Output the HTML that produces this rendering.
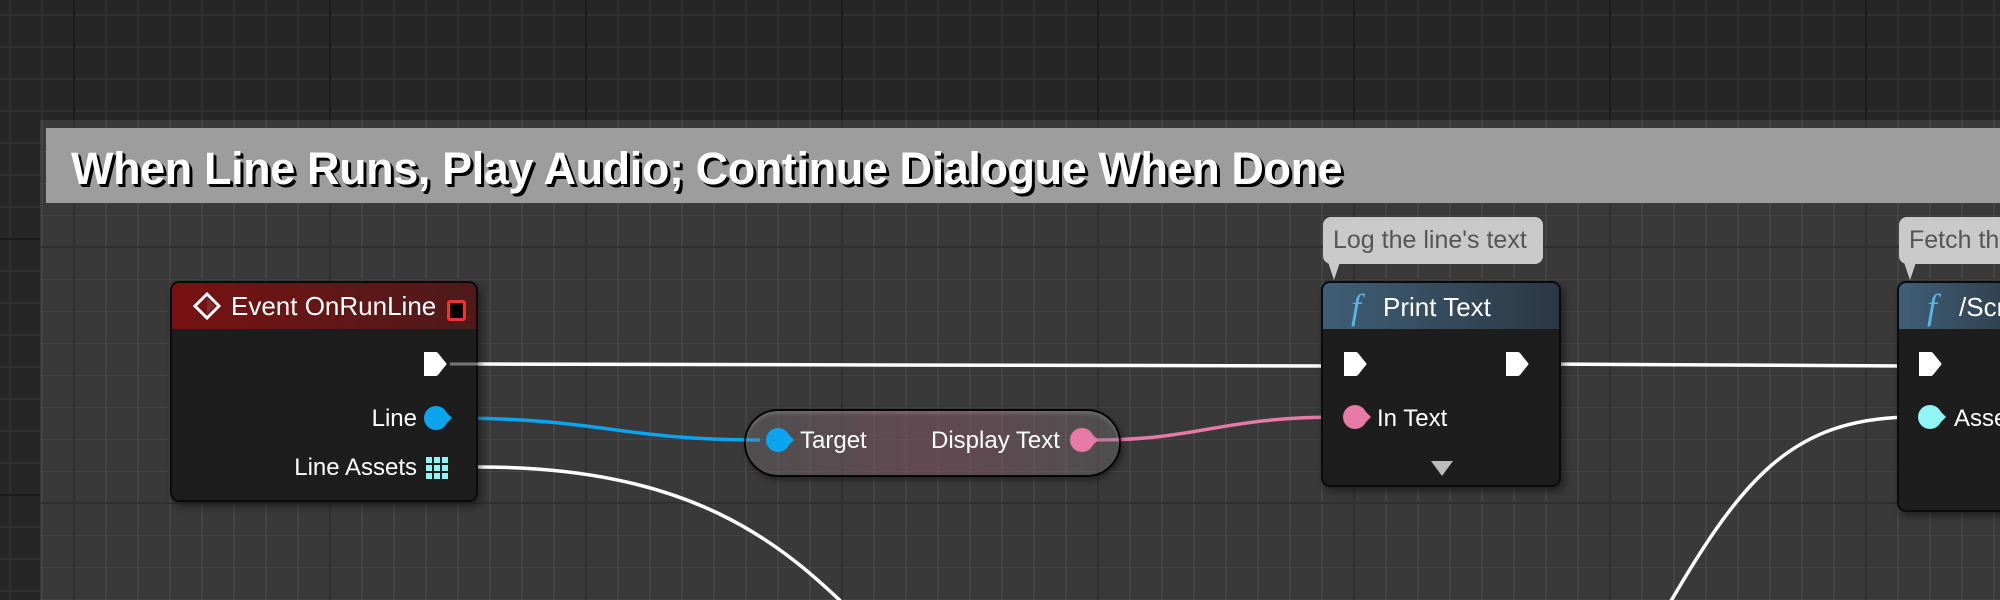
<!DOCTYPE html>
<html><head><meta charset="utf-8"><style>
html,body{margin:0;padding:0;}
body{width:2000px;height:600px;overflow:hidden;position:relative;font-family:"Liberation Sans",Arial,sans-serif;
background-color:#262626;
background-image:
linear-gradient(90deg,rgba(0,0,0,0) 73px,#1c1c1c 73px,#1c1c1c 75px,rgba(0,0,0,0) 75px),
linear-gradient(0deg,rgba(0,0,0,0) 7px,#1c1c1c 7px,#1c1c1c 9px,rgba(0,0,0,0) 9px),
linear-gradient(90deg,rgba(0,0,0,0) 9px,#2f2f2f 9px,#2f2f2f 11px,rgba(0,0,0,0) 11px),
linear-gradient(0deg,rgba(0,0,0,0) 7px,#2f2f2f 7px,#2f2f2f 9px,rgba(0,0,0,0) 9px);
background-size:256px 256px,256px 256px,32px 32px,32px 32px;
background-position:0 0,0 -9px,0 0,0 -9px;}
.comment{position:absolute;left:40px;top:120px;width:1960px;height:480px;
background-color:#393939;
background-image:
linear-gradient(90deg,rgba(0,0,0,0) 33px,#303030 33px,#303030 35px,rgba(0,0,0,0) 35px),
linear-gradient(0deg,rgba(0,0,0,0) 127px,#303030 127px,#303030 129px,rgba(0,0,0,0) 129px),
linear-gradient(90deg,rgba(0,0,0,0) 1px,#444 1px,#444 3px,rgba(0,0,0,0) 3px),
linear-gradient(0deg,rgba(0,0,0,0) 31px,#444 31px,#444 33px,rgba(0,0,0,0) 33px);
background-size:256px 256px,256px 256px,32px 32px,32px 32px;
background-position:0 0,0 -1px,0 0,0 -1px;}
.title{position:absolute;left:46px;top:128px;width:1954px;height:75px;background:#9d9d9d;}
.title span{position:absolute;left:25px;top:15px;font-size:45px;font-weight:bold;color:#fff;white-space:nowrap;
text-shadow:3px 3px 0 #000,2px 2px 1px #000;letter-spacing:-0.4px;}
.node{position:absolute;background:#1d1d1d;border:2px solid #0b0b0b;border-radius:9px;overflow:hidden;box-shadow:3px 4px 8px rgba(0,0,0,.45);}
.hdr{position:absolute;left:0;top:0;right:0;height:46px;color:#fff;font-size:26px;}
.lbl{position:absolute;color:#fff;font-size:24px;white-space:nowrap;}
.bubble{position:absolute;background:#c9c9c9;border-radius:8px;color:#555;font-size:25px;white-space:nowrap;}
.pill{position:absolute;left:744px;top:409px;width:373px;height:64px;border:2px solid #050505;border-radius:34px;
background:linear-gradient(90deg,rgba(120,120,120,.35),rgba(150,90,110,.45) 50%,rgba(120,120,120,.35));
box-shadow:inset 0 3px 3px rgba(255,255,255,.15),2px 3px 6px rgba(0,0,0,.4);}
svg{position:absolute;left:0;top:0;}
</style></head><body>
<div class="comment"></div>
<div class="title"><span>When Line Runs, Play Audio; Continue Dialogue When Done</span></div>

<svg width="2000" height="600">
<g fill="none" stroke-width="3.5">
<path d="M478,364 L1340,366" stroke="#fff"/>
<path d="M1540,364 L1910,366" stroke="#fff"/>
<path d="M450,418 C600,418 620,440 760,440" stroke="#0aa5ee"/>
<path d="M1095,440 C1200,440 1220,417 1340,417" stroke="#e87aa8"/>
<path d="M478,467 C690,467 780,540 860,620" stroke="#fff"/>
<path d="M1915,417 C1790,417 1740,480 1660,620" stroke="#fff"/>
</g>
</svg>

<!-- Event node -->
<div class="node" style="left:170px;top:281px;width:304px;height:217px;">
<div class="hdr" style="background:linear-gradient(90deg,#781212,#4e1a1a);">
<svg width="30" height="30" style="left:20px;top:8px"><path d="M15,3 L27,15 L15,27 L3,15 Z" fill="none" stroke="#fff" stroke-width="3"/><path d="M15,7 L23,15 L15,23 Z" fill="#8a3a3a" opacity=".6"/></svg>
<span style="position:absolute;left:59px;top:8px;">Event OnRunLine</span>
<div style="position:absolute;left:275px;top:17px;width:13px;height:15px;background:#000;border:3px solid #e33;border-radius:3px;"></div>
</div>
<div class="lbl" style="right:59px;top:122px;">Line</div>
<div class="lbl" style="right:59px;top:171px;">Line Assets</div>
</div>

<!-- pill -->
<div class="pill"></div>
<div class="lbl" style="left:800px;top:427px;">Target</div>
<div class="lbl" style="left:931px;top:427px;">Display Text</div>

<!-- Print Text -->
<div class="bubble" style="left:1323px;top:217px;width:220px;height:47px;"><span style="position:absolute;left:10px;top:9px;">Log the line's text</span></div>
<svg width="2000" height="600"><path d="M1328,262 L1340,262 L1334,280 Z" fill="#c9c9c9"/><path d="M1904,262 L1916,262 L1910,280 Z" fill="#c9c9c9"/></svg>
<div class="node" style="left:1321px;top:281px;width:236px;height:202px;">
<div class="hdr" style="background:linear-gradient(90deg,#3f5e76,#2b3844);">
<span style="position:absolute;left:28px;top:3px;font-family:'Liberation Serif',serif;font-style:italic;font-size:36px;color:#5ab4ea;">f</span>
<span style="position:absolute;left:60px;top:9px;">Print Text</span>
</div>
<div class="lbl" style="left:54px;top:122px;">In Text</div>
<svg width="30" height="20" style="left:106px;top:176px"><path d="M2,2 L24,2 L13,17 Z" fill="#bbb"/></svg>
</div>

<!-- right node -->
<div class="bubble" style="left:1899px;top:217px;width:140px;height:47px;"><span style="position:absolute;left:10px;top:9px;">Fetch the</span></div>
<svg width="2000" height="600"><path d="M1904,262 L1916,262 L1910,280 Z" fill="#c9c9c9"/></svg>
<div class="node" style="left:1897px;top:281px;width:140px;height:227px;">
<div class="hdr" style="background:linear-gradient(90deg,#3f5e76,#2b3844);">
<span style="position:absolute;left:28px;top:3px;font-family:'Liberation Serif',serif;font-style:italic;font-size:36px;color:#5ab4ea;">f</span>
<span style="position:absolute;left:60px;top:9px;">/Script</span>
</div>
<div class="lbl" style="left:55px;top:122px;">Assets</div>
</div>

<!-- pins -->
<svg width="2000" height="600">
<defs><path id="ex" d="M0,0 H12 Q13,0 14,1 L22,11 Q23,12 22,13 L14,23 Q13,24 12,24 H0 Z" fill="#fff"/></defs>
<use href="#ex" x="424" y="352"/>
<use href="#ex" x="1344" y="352"/>
<use href="#ex" x="1506" y="352"/>
<use href="#ex" x="1919" y="352"/>
<path d="M478,364 H450" stroke="#777" stroke-width="3"/>
<circle cx="436" cy="418" r="12" fill="#0aa5ee"/><path d="M446,412 L452,418 L446,424Z" fill="#0aa5ee"/>
<circle cx="778" cy="440" r="12" fill="#0aa5ee"/><path d="M788,434 L794,440 L788,446Z" fill="#0aa5ee"/>
<circle cx="1082" cy="440" r="12" fill="#e87aa8"/><path d="M1092,434 L1098,440 L1092,446Z" fill="#e87aa8"/>
<circle cx="1355" cy="417" r="12" fill="#e87aa8"/><path d="M1365,411 L1371,417 L1365,423Z" fill="#e87aa8"/>
<circle cx="1930" cy="417" r="12" fill="#8ff5f5"/><path d="M1940,411 L1946,417 L1940,423Z" fill="#8ff5f5"/>
<g fill="#8ff5f5">
<rect x="426" y="457" width="6" height="6"/><rect x="434" y="457" width="6" height="6"/><rect x="442" y="457" width="6" height="6"/>
<rect x="426" y="465" width="6" height="6"/><rect x="434" y="465" width="6" height="6"/><rect x="442" y="465" width="6" height="6"/>
<rect x="426" y="473" width="6" height="6"/><rect x="434" y="473" width="6" height="6"/><rect x="442" y="473" width="6" height="6"/>
</g>
</svg>
</body></html>
